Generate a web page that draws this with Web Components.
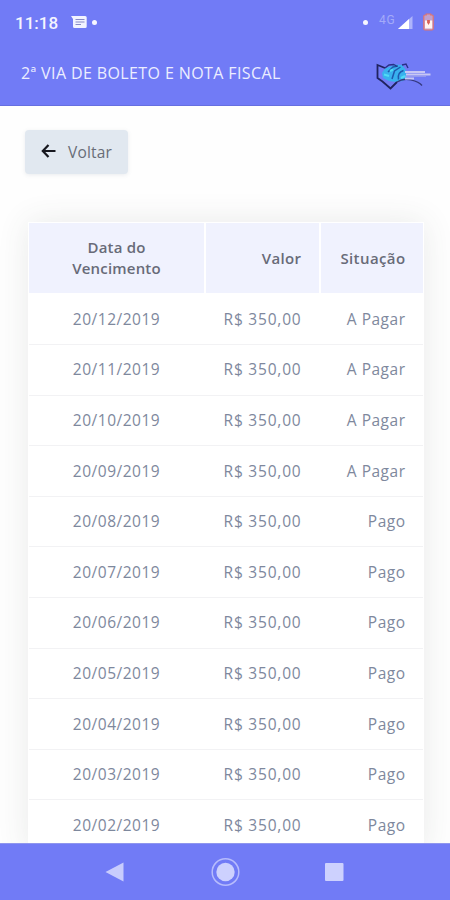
<!DOCTYPE html>
<html lang="pt-BR">
<head>
<meta charset="utf-8">
<meta name="viewport" content="width=device-width, initial-scale=1">
<title>2ª Via de Boleto e Nota Fiscal</title>
<style>
    body {
        margin: 0;
        background-color: #fefefe;
        font-family: "Open Sans", "Noto Sans", sans-serif;
        --primary: #717bf6;
    }
</style>
</head>
<body>
<boleto-app></boleto-app>

<script>
class StatusBar extends HTMLElement {
    constructor() {
        super();
        this.shadow = this.attachShadow({ mode: "open" });
    }

    connectedCallback() {
        this.shadow.innerHTML = `
        <style>
            :host {
                display: flex;
                align-items: center;
                height: 44px;
                padding: 0 15px;
                color: #f4f5ff;
                font: 500 17px/20px Roboto, sans-serif;
            }
            .time { width: 44px; margin-top: 1px; }
            svg { display: block; }
            .message { margin-left: 12px; }
            .dot { width: 5px; height: 5px; border-radius: 50%; background-color: #f6f7ff; }
            .left { margin-left: 5px; }
            .right { margin-left: auto; }
            .network {
                margin: -5px 0 0 11px;
                width: 19px;
                color: #a3aaf9;
                font-size: 12px;
                font-weight: 400;
                line-height: 14px;
                letter-spacing: 0.8px;
            }
            .signal { margin-top: 2px; }
            .battery { margin-left: 8px; }
        </style>
        <span class="time">11:18</span>
        <svg class="message" width="16" height="14" viewBox="0 0 16 14">
            <path d="M0 1h14.200q1.500 0 1.500 1.500v9q0 1.500-1.500 1.500H3.500Q2 13 2 11.500V4z" fill="#f2f3ff"/>
            <path d="M4.500 4.500h9M4.500 7h9M4.500 9.500h5.500" stroke="#888bc7" stroke-width="1"/>
        </svg>
        <i class="dot left"></i>
        <i class="dot right"></i>
        <span class="network">4G</span>
        <svg class="signal" width="17" height="14" viewBox="0 0 17 14">
            <path d="M14.500 0v13H0z" fill="#aeb4fb"/>
            <path d="M11 3.100V13H0z" fill="#fff"/>
        </svg>
        <svg class="battery" width="12" height="18" viewBox="0 0 12 18">
            <path d="M3.300 2V1h4.400v1H9q1.200 0 1.200 1.200v12.600Q10.200 17 9 17H2Q.8 17 .8 15.800V3.200Q.8 2 2 2z" fill="#c1a0cf" stroke="#e0746f" stroke-width="1.200"/>
            <path d="M2 7.500h7.200v8H2z" fill="#fff5f1"/>
            <path d="M4.100 7h2.800v2.500L5.500 12 4.100 9.500z" fill="#d96158"/>
        </svg>
        `;
    }
}

class TitleBar extends HTMLElement {
    constructor() {
        super();
        this.shadow = this.attachShadow({ mode: "open" });
    }

    connectedCallback() {
        this.shadow.innerHTML = `
        <style>
            :host {
                display: flex;
                align-items: center;
                justify-content: space-between;
                height: 62px;
                padding: 0 19px 0 21px;
                box-sizing: border-box;
                border-bottom: 1px solid #666fe0;
                color: #eceeff;
                font-size: 16px;
                line-height: 20px;
                white-space: nowrap;
            }
            .title { margin-top: -3px; letter-spacing: 0.39px; }
            svg { display: block; margin-top: 1px; }
        </style>
        <span class="title"><slot></slot></span>
        <svg width="56" height="30" viewBox="0 0 56 30" fill="none">
            <path d="M7 13l3-4.500 5-2 5-2 7 .5 4 5 1 7-4 4-7 1-7-1-6-3z" fill="#38b1ee"/>
            <path d="M13 12l5-5 5-1M17 19l2.500-8 6-4M23.500 19.500q-1.500-7 5-9" stroke="#1f58ad" stroke-width="1.500"/>
            <path d="M9 14.500l5 1.500M15 11l3-1.500M26 18l4-2" stroke="#50dcf4" stroke-width="2"/>
            <path d="M10 8L2.500 5v13l5 3.500 8 7 6.500-6.500" stroke="#20235f" stroke-width="1.800"/>
            <path d="M22 22q6-4 14-2.200 8 2 11 5.700" stroke="#34397f" stroke-width="1.300"/>
            <path d="M10 8l4-3 5-.5M19 4.500l3 2M27 5l4-1 2 4" stroke="#293086" stroke-width="1.400"/>
            <path d="M30 12h20M31 14.500h24.500M30 18.500h9" stroke="#c8c7f4" stroke-width="2"/>
            <path d="M30 16.200h21" stroke="#a4a6ed" stroke-width="1"/>
        </svg>
        `;
    }
}

class BackButton extends HTMLElement {
    constructor() {
        super();
        this.shadow = this.attachShadow({ mode: "open" });
    }

    connectedCallback() {
        this.shadow.innerHTML = `
        <style>
            :host { display: block; }
            button {
                display: flex;
                align-items: center;
                gap: 12px;
                width: 103px;
                height: 44px;
                padding: 0 0 0 16px;
                border: 0;
                border-radius: 4px;
                background-color: #e1e8f0;
                box-shadow: 0 1px 4px rgba(80, 100, 120, 0.12);
                color: #686d77;
                font: inherit;
                font-size: 15.5px;
                letter-spacing: 0.2px;
            }
            svg { display: block; margin-top: -2px; }
        </style>
        <button type="button">
            <svg width="15" height="14" viewBox="0 0 15 14" fill="none" stroke="#17181f" stroke-width="2.200">
                <path d="M7.500 1L1.800 7l5.700 6M2 7h12.500"/>
            </svg>
            <slot></slot>
        </button>
        `;
    }
}

class BoletoTable extends HTMLElement {
    constructor() {
        super();
        this.shadow = this.attachShadow({ mode: "open" });

        this.rows = [
            { date: "20/12/2019", value: "R$ 350,00", status: "A Pagar" },
            { date: "20/11/2019", value: "R$ 350,00", status: "A Pagar" },
            { date: "20/10/2019", value: "R$ 350,00", status: "A Pagar" },
            { date: "20/09/2019", value: "R$ 350,00", status: "A Pagar" },
            { date: "20/08/2019", value: "R$ 350,00", status: "Pago" },
            { date: "20/07/2019", value: "R$ 350,00", status: "Pago" },
            { date: "20/06/2019", value: "R$ 350,00", status: "Pago" },
            { date: "20/05/2019", value: "R$ 350,00", status: "Pago" },
            { date: "20/04/2019", value: "R$ 350,00", status: "Pago" },
            { date: "20/03/2019", value: "R$ 350,00", status: "Pago" },
            { date: "20/02/2019", value: "R$ 350,00", status: "Pago" }
        ];
    }

    connectedCallback() {
        this.shadow.innerHTML = `
        <style>
            :host {
                display: block;
                padding: 1px;
                background-color: #fff;
                box-shadow: 0 0 30px rgba(60, 70, 60, 0.11);
                font-size: 15.500px;
                line-height: 21px;
            }
            .row {
                display: grid;
                grid-template-columns: 175px 113px 102px;
                column-gap: 2px;
                height: 50.6px;
                box-sizing: border-box;
                border-bottom: 1.500px solid #f2f2f4;
                color: #7e889d;
                letter-spacing: 0.5px;
            }
            .head {
                height: 70px;
                margin-bottom: 1.5px;
                border: 0;
                color: #686b78;
                font-size: 15px;
                font-weight: 600;
                letter-spacing: 0.2px;
            }
            .row > span {
                display: flex;
                align-items: center;
                justify-content: flex-end;
                padding-right: 17.5px;
            }
            .row > span:nth-child(2) { letter-spacing: 0.8px; }
            .head > span:nth-child(n + 2) { letter-spacing: 0.4px; }
            .row > span:first-child {
                justify-content: center;
                padding: 0;
                text-align: center;
            }
            .head > span { background-color: #f0f2fe; }
        </style>
        <div class="row head">
            <span>Data do<br>Vencimento</span>
            <span>Valor</span>
            <span>Situação</span>
        </div>
        ${this.rows.map((row) => `
            <div class="row">
                <span>${row.date}</span>
                <span>${row.value}</span>
                <span>${row.status}</span>
            </div>
        `).join("")}
        `;
    }
}

class NavButtons extends HTMLElement {
    constructor() {
        super();
        this.shadow = this.attachShadow({ mode: "open" });
    }

    connectedCallback() {
        this.shadow.innerHTML = `
        <style>
            :host {
                display: flex;
                align-items: center;
                justify-content: space-between;
                height: 57px;
                box-sizing: border-box;
                padding: 0 105px;
                border-top: 1px solid #8f96ee;
                background-color: var(--primary);
            }
            svg { display: block; }
        </style>
        <svg width="20" height="20" viewBox="0 0 20 20" fill="#c8ccfd">
            <path d="M18.500 .5v19L.5 10z"/>
        </svg>
        <svg width="30" height="30" viewBox="0 0 30 30">
            <circle cx="15.500" cy="15" r="13.300" fill="none" stroke="#b7bcfc" stroke-width="1.500"/>
            <circle cx="15.500" cy="15" r="9.200" fill="#cdd1fe"/>
        </svg>
        <svg width="20" height="20" viewBox="0 0 20 20">
            <rect x="0" y="1" width="18.500" height="18" rx="1" fill="#cdd1fe"/>
        </svg>
        `;
    }
}

class BoletoApp extends HTMLElement {
    constructor() {
        super();
        this.shadow = this.attachShadow({ mode: "open" });
    }

    connectedCallback() {
        this.shadow.innerHTML = `
        <style>
            :host {
                display: flex;
                flex-direction: column;
                height: 100vh;
                overflow: hidden;
            }
            header { flex: none; background-color: var(--primary); }
            main {
                flex: 1;
                min-height: 0;
                overflow: hidden;
                padding: 24px 25px 0;
            }
            boleto-table { margin: 48px 0 0 3px; width: 396px; box-sizing: border-box; }
            nav-buttons { flex: none; }
        </style>
        <header>
            <status-bar></status-bar>
            <title-bar>2ª VIA DE BOLETO E NOTA FISCAL</title-bar>
        </header>
        <main>
            <back-button>Voltar</back-button>
            <boleto-table></boleto-table>
        </main>
        <nav-buttons></nav-buttons>
        `;
    }
}

window.customElements.define("status-bar", StatusBar);
window.customElements.define("title-bar", TitleBar);
window.customElements.define("back-button", BackButton);
window.customElements.define("boleto-table", BoletoTable);
window.customElements.define("nav-buttons", NavButtons);
window.customElements.define("boleto-app", BoletoApp);
</script>
</body>
</html>
